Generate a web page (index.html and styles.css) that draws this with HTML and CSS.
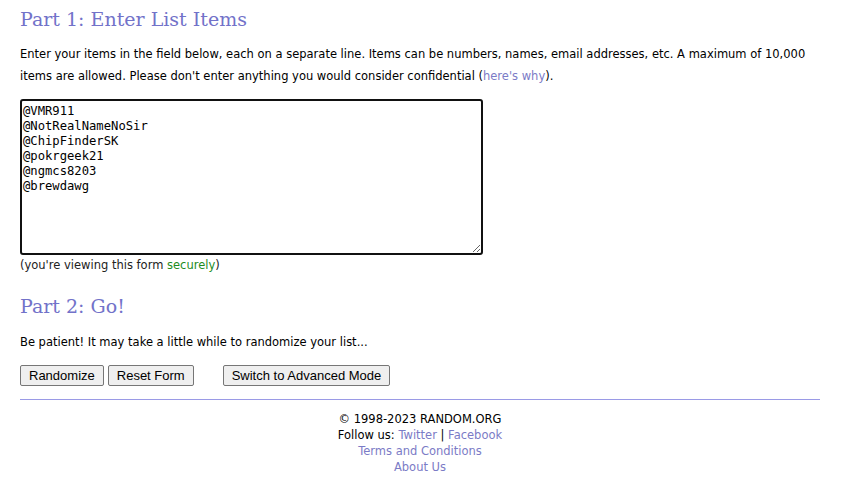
FILE: index.html
```html
<!DOCTYPE html>
<html lang="en">
<head>
    <meta charset="UTF-8">
    <title>RANDOM.ORG - List Randomizer</title>
    <link rel="stylesheet" href="styles.css">
</head>
<body>
    <div class="page">
        <h2>Part 1: Enter List Items</h2>
        <p class="intro">Enter your items in the field below, each on a separate line. Items can be numbers, names, email addresses, etc. A maximum of 10,000 items are allowed. Please don't enter anything you would consider confidential (<a href="#">here's why</a>).</p>
        <form>
            <textarea class="items" spellcheck="false">@VMR911
@NotRealNameNoSir
@ChipFinderSK
@pokrgeek21
@ngmcs8203
@brewdawg</textarea>
            <div class="secure">(you're viewing this form <span class="green">securely</span>)</div>

            <h2 class="part2">Part 2: Go!</h2>
            <p class="note">Be patient! It may take a little while to randomize your list...</p>
            <div class="buttons">
                <button type="button">Randomize</button>
                <button type="reset">Reset Form</button>
                <button type="button" class="advanced">Switch to Advanced Mode</button>
            </div>
        </form>
        <hr>
        <div class="footer">
            <div>&copy; 1998-2023 RANDOM.ORG</div>
            <div>Follow us: <a href="#">Twitter</a> | <a href="#">Facebook</a></div>
            <div><a href="#">Terms and Conditions</a></div>
            <div><a href="#">About Us</a></div>
        </div>
    </div>
</body>
</html>
```

FILE: styles.css
```css
body {
    margin: 0;
    background: #fff;
    color: #000;
    font-family: "DejaVu Sans", Tahoma, sans-serif;
    font-size: 11.5px;
}
.page {
    padding: 0 26px 0 20px;
}
h2 {
    font-family: "DejaVu Serif", Georgia, serif;
    font-weight: normal;
    font-size: 19px;
    color: #7272c9;
    margin: 0;
    padding-top: 7px;
    line-height: 24px;
}
a {
    color: #7b7bc6;
    text-decoration: none;
}
.intro {
    margin: 12px 10px 0 0;
    line-height: 22px;
}
.items {
    display: block;
    box-sizing: border-box;
    width: 463px;
    height: 156px;
    margin-top: 12px;
    padding: 3px 1px;
    border: 2px solid #111;
    border-radius: 3px;
    font-family: "DejaVu Sans Mono", Consolas, monospace;
    font-size: 12.2px;
    line-height: 15px;
    color: #000;
    resize: both;
}
.secure {
    margin-top: 2px;
    line-height: 16px;
    color: #222;
}
.green {
    color: #1e8c1e;
}
.part2 {
    margin-top: 14px;
}
.note {
    margin: 16px 0 0;
    line-height: 16px;
}
.buttons {
    margin-top: 15px;
    display: flex;
    gap: 4px;
}
button {
    font-family: "Liberation Sans", Arial, sans-serif;
    font-size: 13px;
    height: 21px;
    padding: 0 8px;
    background: #efefef;
    border: 1px solid #767676;
    border-radius: 2px;
    color: #000;
}
.advanced {
    margin-left: 25px;
}
hr {
    border: 0;
    border-top: 1px solid #9a9ae6;
    margin: 13px 0 0;
}
.footer {
    text-align: center;
    font-size: 11.5px;
    line-height: 16px;
    margin-top: 11px;
}
```
